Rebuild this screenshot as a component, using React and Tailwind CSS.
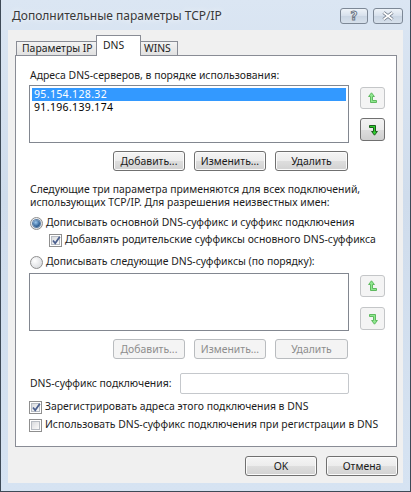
import clsx from "clsx";

const ui = "font-['Noto_Sans',sans-serif] text-[10.4px]";

function Btn({ children, w = "w-[72px]", disabled }) {
  return (
    <div
      className={clsx(
        "h-[20px] flex items-center justify-center rounded-[3px] border leading-none whitespace-nowrap",
        w,
        disabled
          ? "border-[#b9bcbf] bg-[#f4f4f4] text-[#8d8d8d]"
          : "border-[#707070] bg-[linear-gradient(#f5f5f5_0%,#ececec_50%,#dedede_50%,#d2d2d2_100%)] text-[#1a1a1a] shadow-[inset_0_0_0_1px_#fbfbfb]"
      )}
    >
      {children}
    </div>
  );
}

function Arrow({ down, light }) {
  return (
    <svg
      width="10"
      height="12"
      viewBox="0 0 10 12"
      className={down ? "rotate-180" : ""}
    >
      <path
        d="M3.5 0.8 L0.6 4.5 H2.5 V10.5 H8.5 V8.5 H4.5 V4.5 H6.4 Z"
        fill={light ? "#8ee88e" : "#2ed12e"}
        stroke={light ? "#5fb95f" : "#1d5e1d"}
        strokeWidth="1"
      />
    </svg>
  );
}

function ArrowBtn({ down, enabled, h = "h-[22px]" }) {
  return (
    <div
      className={clsx(
        "w-[25px] flex items-center justify-center rounded-[3px] border",
        h,
        enabled
          ? "border-[#707070] bg-[linear-gradient(#f3f3f3_0%,#ebebeb_50%,#dddddd_50%,#cfcfcf_100%)]"
          : "border-[#c4c6c8] bg-[#f4f4f4]"
      )}
    >
      <Arrow down={down} light={!enabled} />
    </div>
  );
}

function Check({ checked }) {
  return (
    <span className="relative w-[13px] h-[13px] shrink-0 border border-[#8f8f8f] bg-white p-[1px] flex">
      <span className="flex-1 border border-[#b7bcc3] bg-[linear-gradient(135deg,#d9dbde,#fbfbfb)]" />
      {checked && (
        <svg
          width="11"
          height="11"
          viewBox="0 0 11 11"
          className="absolute left-[1px] top-[0px]"
        >
          <path
            d="M2 5.5 L4.2 8.2 L8.8 1.8"
            fill="none"
            stroke="#4b5f8e"
            strokeWidth="1.8"
          />
        </svg>
      )}
    </span>
  );
}

function Radio({ checked }) {
  return (
    <span className="w-[13px] h-[13px] shrink-0 rounded-full border border-[#8f8f8f] bg-[radial-gradient(circle_at_35%_35%,#ffffff,#cfd2d6)] flex items-center justify-center">
      {checked && (
        <span className="w-[7px] h-[7px] rounded-full bg-[radial-gradient(circle_at_40%_35%,#9cc8ee,#1d4f86_75%)] shadow-[0_0_0_1px_#5c7fa6]" />
      )}
    </span>
  );
}

function ListRow({ text, selected }) {
  return (
    <div
      className={clsx(
        "h-[13px] leading-[13px] pl-[2px] tracking-[0.35px] text-[10.5px]",
        selected ? "bg-[#3399ff] text-white" : "text-black"
      )}
    >
      {text}
    </div>
  );
}

function Option({ children, control, pl = "pl-[1px]", mt }) {
  return (
    <div className={clsx("h-[16px] flex items-center gap-[3px] whitespace-nowrap", pl, mt)}>
      {control}
      <span>{children}</span>
    </div>
  );
}

export default function App() {
  return (
    <div className={clsx("w-[411px] h-[492px] overflow-hidden bg-white text-[#1c1c1c]", ui)}>
      <div className="h-full flex flex-col border-x border-b border-[#3e4a57] bg-[linear-gradient(#dbe6f3,#cfdcec_40%,#d6e3f2)]">
        {/* title bar */}
        <div className="h-[30px] shrink-0 flex items-start">
          <div className="pl-[11px] pt-[7px] text-[12px] text-[#383838] leading-[18px] [text-shadow:0_0_6px_#ffffff] whitespace-nowrap">
            Дополнительные параметры TCP/IP
          </div>
          <div className="ml-auto mr-[7px] mt-[8px] flex gap-[5px]">
            <div className="w-[28px] h-[16px] rounded-[3px] border border-[#7d8896] bg-[linear-gradient(#eef3f8,#d6e0ec_50%,#c9d5e3_50%,#d7e1ec)] flex items-center justify-center">
              <span className="font-['DejaVu_Sans',sans-serif] font-bold text-[12px] leading-none text-white [-webkit-text-stroke:1px_#6e7886]">
                ?
              </span>
            </div>
            <div className="w-[30px] h-[16px] rounded-[3px] border border-[#7d8896] bg-[linear-gradient(#eef3f8,#d6e0ec_50%,#c9d5e3_50%,#d7e1ec)] flex items-center justify-center">
              <svg width="14" height="10" viewBox="0 0 14 10">
                <path d="M2.5 1.5 L11.5 8.5 M11.5 1.5 L2.5 8.5" stroke="#6e7886" strokeWidth="3.4" />
                <path d="M2.5 1.5 L11.5 8.5 M11.5 1.5 L2.5 8.5" stroke="#ffffff" strokeWidth="1.6" />
              </svg>
            </div>
          </div>
        </div>

        {/* client area */}
        <div className="mx-[7px] h-[453px] bg-[#f0f0f0] pl-[7px] pr-[6px] pt-[5px] flex flex-col">
          {/* tabs */}
          <div className="flex items-end pl-[1px] h-[20px] whitespace-nowrap">
            <div className="h-[14px] w-[81px] border border-b-0 border-[#898c95] bg-[linear-gradient(#f3f3f3,#e1e1e1)] pl-[5px] leading-[13px]">
              Параметры IP
            </div>
            <div className="relative z-10 h-[21px] -mb-px w-[45px] -mx-px border border-b-0 border-[#898c95] bg-white pl-[6px] pt-[1px] leading-[16px]">
              DNS
            </div>
            <div className="h-[14px] w-[38px] border border-b-0 border-l-0 border-[#898c95] bg-[linear-gradient(#f3f3f3,#e1e1e1)] pl-[4px] leading-[13px]">
              WINS
            </div>
          </div>

          {/* tab panel */}
          <div className="h-[392px] border border-[#898c95] bg-white pl-[13px] flex flex-col">
            <div className="mt-[12px] h-[14px] leading-[14px] pl-[1px]">
              Адреса DNS-серверов, в порядке использования:
            </div>

            <div className="mt-[3px] flex">
              <div className="w-[320px] h-[58px] border border-[#828790] bg-white p-[2px]">
                <ListRow text="95.154.128.32" selected />
                <ListRow text="91.196.139.174" />
              </div>
              <div className="ml-[11px] pt-[2px] flex flex-col gap-[9px]">
                <ArrowBtn />
                <ArrowBtn down enabled h="h-[23px]" />
              </div>
            </div>

            <div className="mt-[8px] w-[320px] pr-[1px] flex justify-end gap-[9px]">
              <Btn>Добавить...</Btn>
              <Btn>Изменить...</Btn>
              <Btn w="w-[73px]">Удалить</Btn>
            </div>

            <div className="mt-[12px] leading-[13px] pl-[1px] whitespace-nowrap">
              <div>Следующие три параметра применяются для всех подключений,</div>
              <div>использующих TCP/IP. Для разрешения неизвестных имен:</div>
            </div>

            <Option mt="mt-[6px]" control={<Radio checked />}>
              Дописывать основной DNS-суффикс и суффикс подключения
            </Option>
            <Option mt="mt-[1px]" pl="pl-[20px]" control={<Check checked />}>
              Добавлять родительские суффиксы основного DNS-суффикса
            </Option>
            <Option mt="mt-[6px]" control={<Radio />}>
              Дописывать следующие DNS-суффиксы (по порядку):
            </Option>

            <div className="mt-[3px] flex">
              <div className="w-[320px] h-[58px] border border-[#828790] bg-white" />
              <div className="ml-[11px] pt-[2px] flex flex-col gap-[10px]">
                <ArrowBtn />
                <ArrowBtn down h="h-[23px]" />
              </div>
            </div>

            <div className="mt-[8px] w-[320px] pr-[1px] flex justify-end gap-[9px]">
              <Btn disabled>Добавить...</Btn>
              <Btn disabled>Изменить...</Btn>
              <Btn w="w-[73px]" disabled>
                Удалить
              </Btn>
            </div>

            <div className="mt-[14px] w-[320px] flex items-center whitespace-nowrap">
              <span className="pl-[1px]">DNS-суффикс подключения:</span>
              <div className="ml-auto w-[169px] h-[21px] border border-[#c5c8cc] rounded-[2px] bg-white" />
            </div>

            <Option mt="mt-[5px]" pl="pl-0" control={<Check checked />}>
              Зарегистрировать адреса этого подключения в DNS
            </Option>
            <Option mt="mt-[2px]" pl="pl-0" control={<Check />}>
              Использовать DNS-суффикс подключения при регистрации в DNS
            </Option>
          </div>

          {/* dialog buttons */}
          <div className="mt-[9px] -mr-px flex justify-end gap-[9px]">
            <Btn>OK</Btn>
            <Btn>Отмена</Btn>
          </div>
        </div>
      </div>
    </div>
  );
}
